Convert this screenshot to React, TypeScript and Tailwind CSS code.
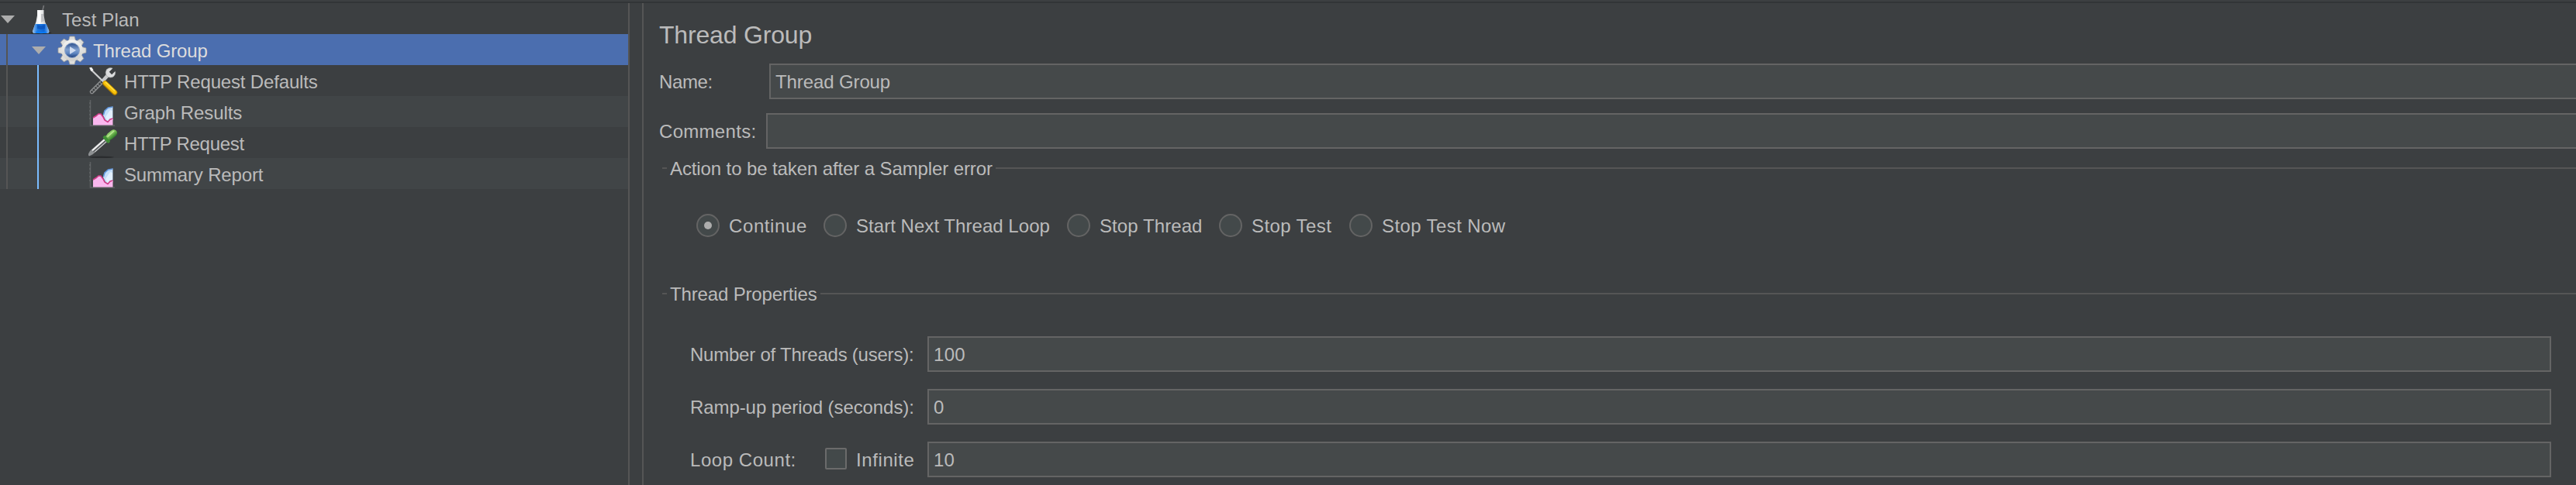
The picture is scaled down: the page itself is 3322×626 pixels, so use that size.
import React from "react";

function Flask() {
  return (
    <svg width="28" height="40" viewBox="0 0 28 40" className="shrink-0">
      <defs>
        <linearGradient id="glass" x1="0" x2="1">
          <stop offset="0" stopColor="#cfd2d4" />
          <stop offset=".4" stopColor="#ffffff" />
          <stop offset="1" stopColor="#a9acae" />
        </linearGradient>
        <linearGradient id="liquid" x1="0" x2="1">
          <stop offset="0" stopColor="#8dbcf0" />
          <stop offset=".3" stopColor="#1b78e0" />
          <stop offset=".7" stopColor="#0c66d8" />
          <stop offset="1" stopColor="#8dbcf0" />
        </linearGradient>
      </defs>
      <ellipse cx="14" cy="37.500" rx="13.5" ry="1.500" fill="#26292b" />
      <path d="M16 8 17.500 2" stroke="#77797b" strokeWidth="1.600" />
      <path d="M9 8h8.500v7l1.500 8 5 11q1 3.500-1.500 4H5q-2.500-.5-1.500-4L7.500 23l1.500-8z" fill="url(#glass)" />
      <path d="M14 13h3l1 9-4 2z" fill="#a6a9ab" opacity=".6" />
      <path d="M6.200 26h14.500l3.300 8q1 3.500-1.500 4H5q-2.500-.5-1.500-4z" fill="url(#liquid)" />
      <path d="M9 27l5 1.500 5-1.500v5l-5 1-5-1z" fill="#0a4fb5" opacity=".7" />
      <path d="M7 36.500q7 1.500 14 0" stroke="#0a7cff" strokeWidth="2" fill="none" />
    </svg>
  );
}

function Gear() {
  return (
    <svg width="38" height="38" viewBox="-19 -19 38 38" className="shrink-0">
      <defs>
        <linearGradient id="lens" x1="0" x2="0" y1="0" y2="1">
          <stop offset="0" stopColor="#2c4f8c" />
          <stop offset=".45" stopColor="#7f9fce" />
          <stop offset=".7" stopColor="#5f86c2" />
          <stop offset="1" stopColor="#173a78" />
        </linearGradient>
        <linearGradient id="metal" x1="0" x2="0" y1="0" y2="1">
          <stop offset="0" stopColor="#f4f4f2" />
          <stop offset="1" stopColor="#cfcfcd" />
        </linearGradient>
      </defs>
      <g fill="#dededc" stroke="#a2a19d" strokeWidth=".8">
        {[0, 45, 90, 135, 180, 225, 270, 315].map((a) => (
          <path key={a} d="M-5-11-3-18h6L5-11z" transform={`rotate(${a})`} />
        ))}
      </g>
      <circle r="13.800" fill="url(#metal)" />
      <circle r="9.500" fill="url(#lens)" stroke="#8fa5c8" strokeWidth="1" />
      <path d="M-3-5 5 0l-8 5z" fill="#e6eefa" opacity=".8" />
    </svg>
  );
}

function Tools() {
  return (
    <svg width="38" height="38" viewBox="0 0 38 38" className="shrink-0">
      <path d="M4.500 32.500 18 19" stroke="#8e9091" strokeWidth="5.400" strokeLinecap="round" />
      <path d="M6 31 18 19" stroke="#3f4244" strokeWidth="2.600" strokeDasharray="2.600 1" />
      <circle cx="4.500" cy="32.500" r="1.500" fill="#3c3f41" />
      <path d="M18 19 26 10" stroke="#c9cacb" strokeWidth="4.600" />
      <circle cx="28.500" cy="7.800" r="6.300" fill="#dcddde" stroke="#9b9d9e" strokeWidth=".6" />
      <path d="M28.500 8.500 37 0" stroke="#3c3f41" strokeWidth="4.800" />
      <path d="M3 3.500 20 20" stroke="#d0d1d2" strokeWidth="2.200" />
      <path d="M1 1.500 4 .800l2.500 3.500-2.500 2z" fill="#f2f2f2" />
      <path d="M21.500 21.500 34 33.500" stroke="#b17f00" strokeWidth="6.600" strokeLinecap="round" />
      <path d="M21.500 21 34 33" stroke="#f8c20b" strokeWidth="4.800" strokeLinecap="round" />
      <path d="M22 20 34 31.500" stroke="#ffe14a" strokeWidth="1.400" />
    </svg>
  );
}

function Chart() {
  return (
    <svg width="38" height="38" viewBox="0 0 38 38" className="shrink-0">
      <path d="M2.500 3v33H34" stroke="#5d6062" strokeWidth="1.600" fill="none" />
      <path d="M1 7h2M1 12h2M1 17h2M1 22h2M1 27h2" stroke="#6b6e70" strokeWidth="1" />
      <path d="M19 23 20.500 17 25.500 13 31.500 11.500V29L25 32 22 29z" fill="#c3def9" />
      <path d="M19.500 22 21 17 25.500 13 31.500 12" stroke="#5f95dc" strokeWidth="1.600" fill="none" />
      <path d="M22 25 28 16l3 1v9l-6 5z" fill="#e2f0ff" />
      <path d="M6 35.500V26l4-2.500 3-2.500h3l3 4 2 4 4 2 3-3 3.500-1v8.500z" fill="#f9b7ee" />
      <path d="M6 26l4-2.500 3-2.500h3l3 4 2 4 4 2.500 3-3.500 3.500-1" stroke="#cf3c88" strokeWidth="1.600" fill="none" />
    </svg>
  );
}

function Dropper() {
  return (
    <svg width="38" height="38" viewBox="0 0 38 38" className="shrink-0">
      <defs>
        <linearGradient id="bulb" x1="0" x2="0" y1="0" y2="1">
          <stop offset="0" stopColor="#8fcf6a" />
          <stop offset=".4" stopColor="#7cc057" />
          <stop offset="1" stopColor="#2f7a2b" />
        </linearGradient>
      </defs>
      <ellipse cx="17" cy="36.800" rx="16" ry="1.200" fill="#2a2c2e" />
      <g transform="translate(0 34.500) rotate(-41.500)">
        <path d="M0-1 5-2.800H30V2.800H5L0 1.500z" fill="#8d9092" />
        <path d="M8-1.300H29" stroke="#f3f3f3" strokeWidth="2" />
        <path d="M8 .700H29" stroke="#55585a" strokeWidth="1.400" />
        <path d="M9 2.200H29" stroke="#c9cacb" strokeWidth="1" />
        <rect x="29" y="-5.500" width="4.500" height="11" rx="1.800" fill="#3f8f35" />
        <path d="M33-3.500 37-4.500H43Q48-4 48 0T43 4.500H37L33 3.500z" fill="url(#bulb)" />
        <path d="M35-1.800H45" stroke="#b5e490" strokeWidth="1.800" strokeLinecap="round" />
      </g>
    </svg>
  );
}

function Arrow() {
  return (
    <svg width="18" height="10" viewBox="0 0 18 10" className="shrink-0">
      <path d="M0 0h18L9 10z" fill="#adadad" />
    </svg>
  );
}

function Child({ icon, label, track, alt }: { icon: React.ReactNode; label: string; track: string; alt?: boolean }) {
  return (
    <div className={`flex h-10 ${alt ? "bg-[#414547]" : ""}`}>
      <div className="ml-2 w-0.5 bg-[#555555]" />
      <div className="ml-[38px] w-0.5 bg-[#7abcff]" />
      <div className="ml-16 flex w-[46px] items-center pt-px">{icon}</div>
      <span className={`pt-px leading-[42px] ${track}`}>{label}</span>
    </div>
  );
}

function Field({ value, className, track = "" }: { value: string; className: string; track?: string }) {
  return (
    <div className={`h-[46px] border-2 border-[#646464] bg-[#45494a] pl-1.5 leading-[44px] ${className} ${track}`}>{value}</div>
  );
}

function Legend({ label, track, gap }: { label: string; track: string; gap: string }) {
  return (
    <div className="flex h-7 pl-6 leading-7">
      <div className="mt-3 h-0.5 w-1.5 bg-[#555555]" />
      <span className={`pl-1 ${gap} ${track}`}>{label}</span>
      <div className="mt-3 h-0.5 grow bg-[#555555]" />
    </div>
  );
}

function Radio({ label, track, width, checked }: { label: string; track: string; width: string; checked?: boolean }) {
  return (
    <div className={`flex shrink-0 ${width}`}>
      <div className="flex h-[30px] w-[30px] shrink-0 items-center justify-center rounded-full border-2 border-[#646464] bg-[#43494a]">
        {checked && <div className="h-2.5 w-2.5 rounded-full bg-[#adadad]" />}
      </div>
      <span className={`pl-3 leading-8 ${track}`}>{label}</span>
    </div>
  );
}

export default function App() {
  return (
    <div className="h-[626px] w-[3322px] overflow-hidden bg-[#3c3f41] font-['Liberation_Sans',Arial,sans-serif] text-[24px] whitespace-nowrap text-[#bbbbbb]">
      <div className="h-1 border-b-2 border-[#323537]" />
      <div className="flex h-[622px]">
        <div className="w-[810px] shrink-0">
          <div className="flex h-10">
            <div className="ml-[1px] w-[38px] pt-4"><Arrow /></div>
            <div className="w-[41px] pt-px"><Flask /></div>
            <span className="pt-px leading-[42px] tracking-[0.12px]">Test Plan</span>
          </div>
          <div className="flex h-10 bg-[#4b6eaf] text-[#dddddd]">
            <div className="ml-2 w-0.5 bg-[#555555]" />
            <div className="ml-[31px] w-[33px] pt-4"><Arrow /></div>
            <div className="flex w-[46px] items-center pt-px"><Gear /></div>
            <span className="pt-px leading-[42px] tracking-[-0.15px]">Thread Group</span>
          </div>
          <Child icon={<Tools />} label="HTTP Request Defaults" track="tracking-[-0.16px]" />
          <Child icon={<Chart />} label="Graph Results" track="tracking-[-0.1px]" alt />
          <Child icon={<Dropper />} label="HTTP Request" track="tracking-[-0.28px]" />
          <Child icon={<Chart />} label="Summary Report" track="tracking-[-0.15px]" alt />
        </div>
        <div className="w-5 shrink-0 border-x-2 border-[#555555]" />
        <div className="min-w-0 grow">
          <h1 className="mt-[23px] h-9 pl-5 text-[32px] leading-9 tracking-[-0.18px]">Thread Group</h1>
          <div className="mt-[19px] flex pl-5">
            <span className="h-[46px] w-[142px] leading-[48px] tracking-[-0.4px]">Name:</span>
            <Field value="Thread Group" className="grow border-r-0" track="tracking-[-0.11px]" />
          </div>
          <div className="mt-[18px] flex pl-5">
            <span className="h-[46px] w-[138px] leading-[48px] tracking-[0.3px]">Comments:</span>
            <Field value="" className="grow border-r-0" />
          </div>
          <div className="mt-3">
            <Legend label="Action to be taken after a Sampler error" track="tracking-[-0.11px]" gap="w-[424px]" />
          </div>
          <div className="mt-11 flex h-[30px] pl-[68px]">
            <Radio label="Continue" track="tracking-[0.6px]" width="w-[164px]" checked />
            <Radio label="Start Next Thread Loop" track="tracking-[0.04px]" width="w-[314px]" />
            <Radio label="Stop Thread" track="tracking-[0.08px]" width="w-[196px]" />
            <Radio label="Stop Test" track="tracking-[0.4px]" width="w-[168px]" />
            <Radio label="Stop Test Now" track="tracking-[0.4px]" width="w-[220px]" />
          </div>
          <div className="mt-[60px]">
            <Legend label="Thread Properties" track="tracking-[-0.15px]" gap="w-[198px]" />
          </div>
          <div className="mt-10 flex flex-col gap-[22px] pr-8 pl-[60px]">
            <div className="flex">
              <span className="h-[46px] w-[306px] leading-[48px] tracking-[-0.23px]">Number of Threads (users):</span>
              <Field value="100" className="grow" track="tracking-[0.3px]" />
            </div>
            <div className="flex">
              <span className="h-[46px] w-[306px] leading-[48px] tracking-[-0.08px]">Ramp-up period (seconds):</span>
              <Field value="0" className="grow" />
            </div>
            <div className="flex">
              <span className="h-[46px] w-[174px] leading-[48px] tracking-[0.55px]">Loop Count:</span>
              <div className="mt-2 h-7 w-7 shrink-0 rounded-[2px] border-2 border-[#6b6b6b] bg-[#43494a]" />
              <span className="h-[46px] w-[104px] pl-3 leading-[48px] tracking-[0.6px]">Infinite</span>
              <Field value="10" className="grow" track="tracking-[0.2px]" />
            </div>
          </div>
        </div>
      </div>
    </div>
  );
}
